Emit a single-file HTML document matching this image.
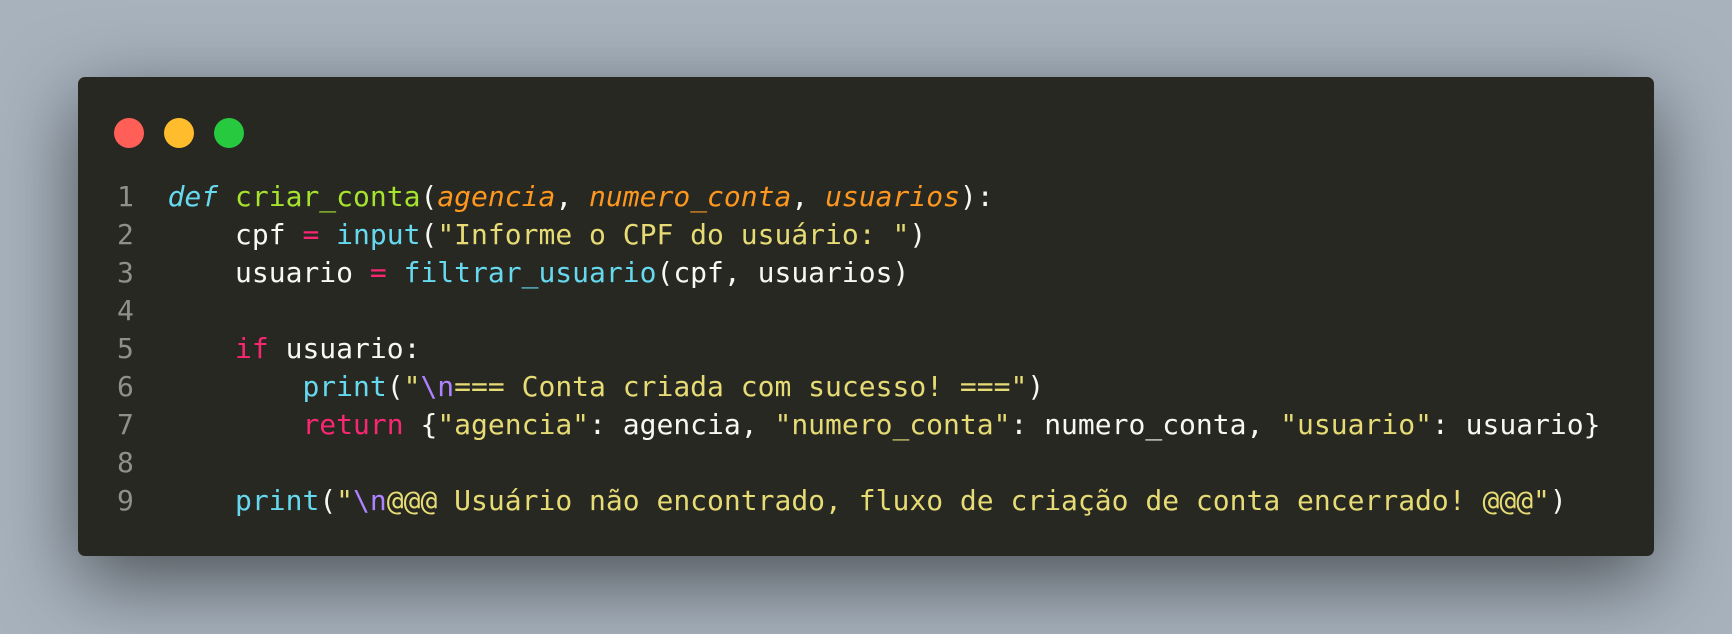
<!DOCTYPE html>
<html><head><meta charset="utf-8"><style>
html,body{margin:0;padding:0}
body{width:1732px;height:634px;background:#a7b2bd;position:relative;overflow:hidden}
.win{position:absolute;left:78px;top:77px;width:1576px;height:479px;background:#272822;border-radius:7px;box-shadow:0 24px 80px rgba(0,0,0,0.55)}
.dot{position:absolute;top:41px;width:30px;height:30px;border-radius:50%}
pre{position:absolute;left:39px;top:101px;margin:0;font-family:"DejaVu Sans Mono","Liberation Mono",monospace;font-size:28px;line-height:38px;color:#f8f8f2}
.ln{color:#90908a}
.k{color:#66d9ef;font-style:italic}
.f{color:#a6e22e}
.p{color:#fd971f;font-style:italic}
.o{color:#f92672}
.b{color:#66d9ef}
.s{color:#e6db74}
.e{color:#ae81ff}
</style></head><body>
<div class="win">
<div class="dot" style="left:36px;background:#ff5f56"></div>
<div class="dot" style="left:86px;background:#ffbd2e"></div>
<div class="dot" style="left:136px;background:#27c93f"></div>
<pre><span class="ln">1</span>  <span class="k">def</span> <span class="f">criar_conta</span>(<span class="p">agencia</span>, <span class="p">numero_conta</span>, <span class="p">usuarios</span>):
<span class="ln">2</span>      cpf <span class="o">=</span> <span class="b">input</span>(<span class="s">"Informe o CPF do usuário: "</span>)
<span class="ln">3</span>      usuario <span class="o">=</span> <span class="b">filtrar_usuario</span>(cpf, usuarios)
<span class="ln">4</span>
<span class="ln">5</span>      <span class="o">if</span> usuario:
<span class="ln">6</span>          <span class="b">print</span>(<span class="s">"</span><span class="e">\n</span><span class="s">=== Conta criada com sucesso! ==="</span>)
<span class="ln">7</span>          <span class="o">return</span> {<span class="s">"agencia"</span>: agencia, <span class="s">"numero_conta"</span>: numero_conta, <span class="s">"usuario"</span>: usuario}
<span class="ln">8</span>
<span class="ln">9</span>      <span class="b">print</span>(<span class="s">"</span><span class="e">\n</span><span class="s">@@@ Usuário não encontrado, fluxo de criação de conta encerrado! @@@"</span>)</pre>
</div>
</body></html>
